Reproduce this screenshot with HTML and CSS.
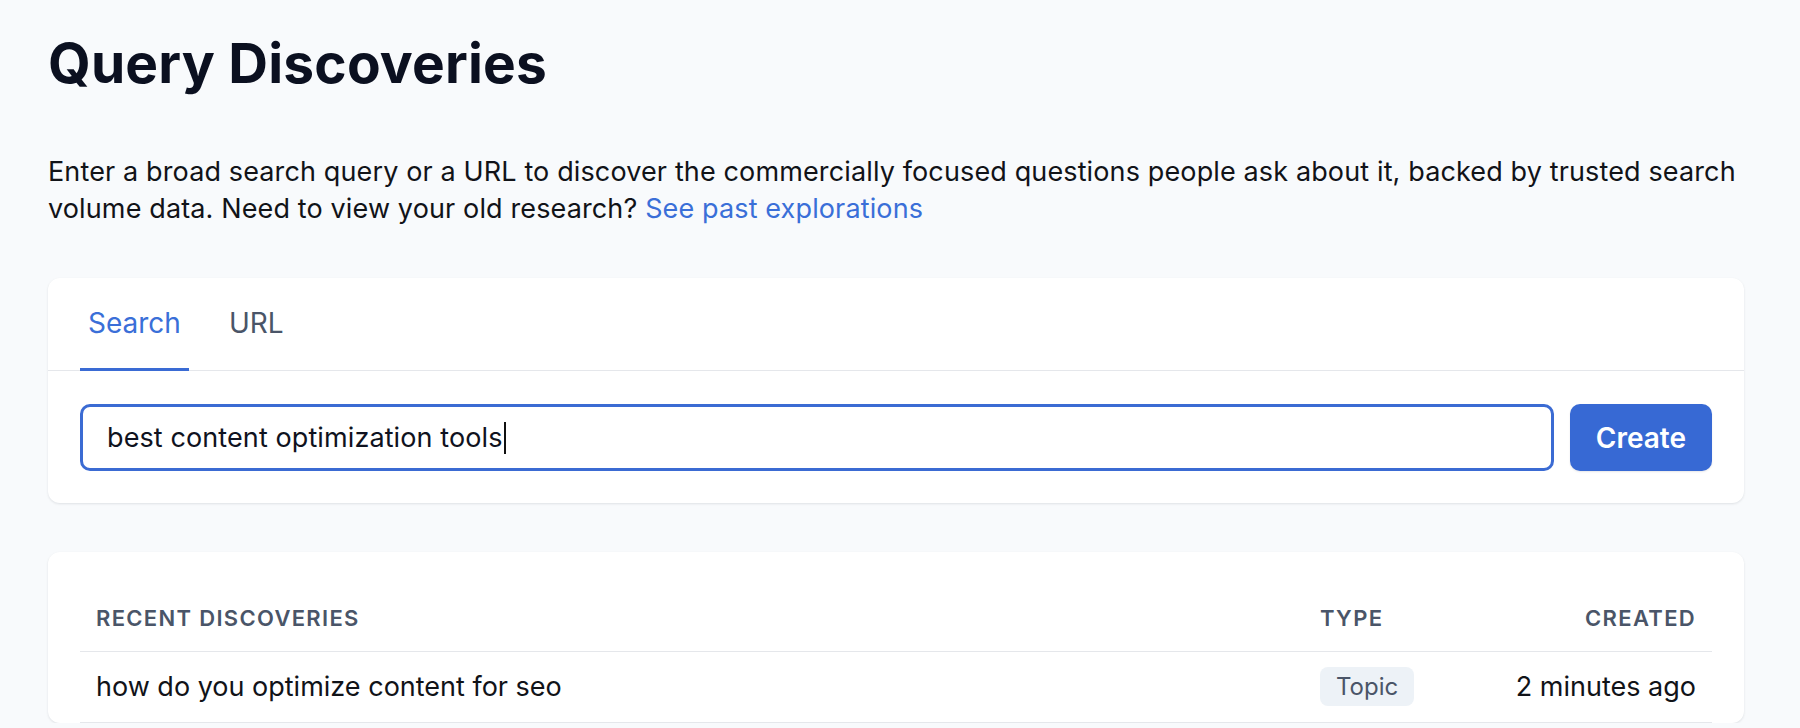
FILE: index.html
```html
<!DOCTYPE html>
<html lang="en">
<head>
<meta charset="utf-8">
<title>Query Discoveries</title>
<link rel="stylesheet" href="styles.css">
</head>
<body>
<main class="page">
  <h1 class="title">Query Discoveries</h1>
  <p class="intro">Enter a broad search query or a URL to discover the commercially focused questions people ask about it, backed by trusted search volume data. Need to view your old research? <a class="link" href="#">See past explorations</a></p>

  <section class="card search-card">
    <nav class="tabs">
      <span class="tab active">Search</span>
      <span class="tab">URL</span>
    </nav>
    <div class="search-row">
      <div class="input" role="textbox">best content optimization tools<span class="caret"></span></div>
      <button class="btn" type="button">Create</button>
    </div>
  </section>

  <section class="card list-card">
    <div class="grid head">
      <div class="cell">Recent Discoveries</div>
      <div class="cell">Type</div>
      <div class="cell right">Created</div>
    </div>
    <div class="grid row">
      <div class="cell">how do you optimize content for seo</div>
      <div class="cell"><span class="badge">Topic</span></div>
      <div class="cell right">2 minutes ago</div>
    </div>
  </section>
</main>
</body>
</html>
```
FILE: styles.css
```css
html, body {
  margin: 0;
  padding: 0;
  background: #f8fafc;
}
body {
  font-family: Inter, "Noto Sans", sans-serif;
  color: #0f1220;
}
.page {
  padding: 33px 56px 0 48px;
}
.title {
  margin: 0;
  font-size: 55px;
  line-height: 60px;
  font-weight: 700;
  color: #0b1020;
  letter-spacing: 0.2px;
}
.intro {
  margin: 60px 0 0;
  font-size: 27px;
  line-height: 37px;
  letter-spacing: 0.13px;
  color: #111318;
}
.link {
  color: #3a6fd8;
  text-decoration: none;
}
.card {
  background: #fff;
  border-radius: 12px;
  box-shadow: 0 1px 3px rgba(15, 23, 42, 0.07), 0 1px 2px rgba(15, 23, 42, 0.04);
}
.search-card {
  margin-top: 51px;
}
.tabs {
  display: flex;
  gap: 32px;
  padding: 0 32px;
  border-bottom: 1px solid #e5e7eb;
}
.tab {
  padding: 27px 8px 27px;
  font-size: 28px;
  line-height: 36px;
  color: #4a5568;
  border-bottom: 3px solid transparent;
  margin-bottom: -1px;
}
.tab.active {
  color: #3a6fd8;
  border-bottom-color: #3a6bd4;
}
.search-row {
  display: flex;
  gap: 16px;
  padding: 33px 32px 32px;
}
.input {
  flex: 1;
  height: 67px;
  box-sizing: border-box;
  border: 3px solid #3b6bd3;
  border-radius: 10px;
  padding: 0 24px;
  display: flex;
  align-items: center;
  font-size: 27px;
  letter-spacing: 0.1px;
  color: #0f1220;
}
.caret {
  display: inline-block;
  width: 2px;
  height: 32px;
  background: #111;
  margin-left: 1px;
}
.btn {
  height: 67px;
  padding: 0 26px;
  border: 0;
  border-radius: 10px;
  background: #3769d4;
  color: #fff;
  font-family: inherit;
  font-size: 28px;
  font-weight: 600;
  box-shadow: 0 1px 2px rgba(15, 23, 42, 0.1);
}
.list-card {
  margin-top: 49px;
  padding: 32px 32px 0;
}
.grid {
  display: grid;
  grid-template-columns: 1fr 178px 230px;
  align-items: center;
  border-bottom: 1px solid #e5e7eb;
}
.cell {
  padding: 0 16px;
  white-space: nowrap;
}
.right {
  text-align: right;
}
.head {
  padding: 18px 0 17px;
  font-size: 22px;
  line-height: 32px;
  font-weight: 600;
  text-transform: uppercase;
  letter-spacing: 0.06em;
  color: #4a5568;
}
.row {
  padding: 15px 0 16px;
  font-size: 27px;
  line-height: 36px;
  color: #111318;
}
.badge {
  display: inline-block;
  padding: 2px 16px;
  border-radius: 8px;
  background: #edf2f7;
  color: #4a5568;
  font-size: 24px;
  line-height: 35px;
}
```
